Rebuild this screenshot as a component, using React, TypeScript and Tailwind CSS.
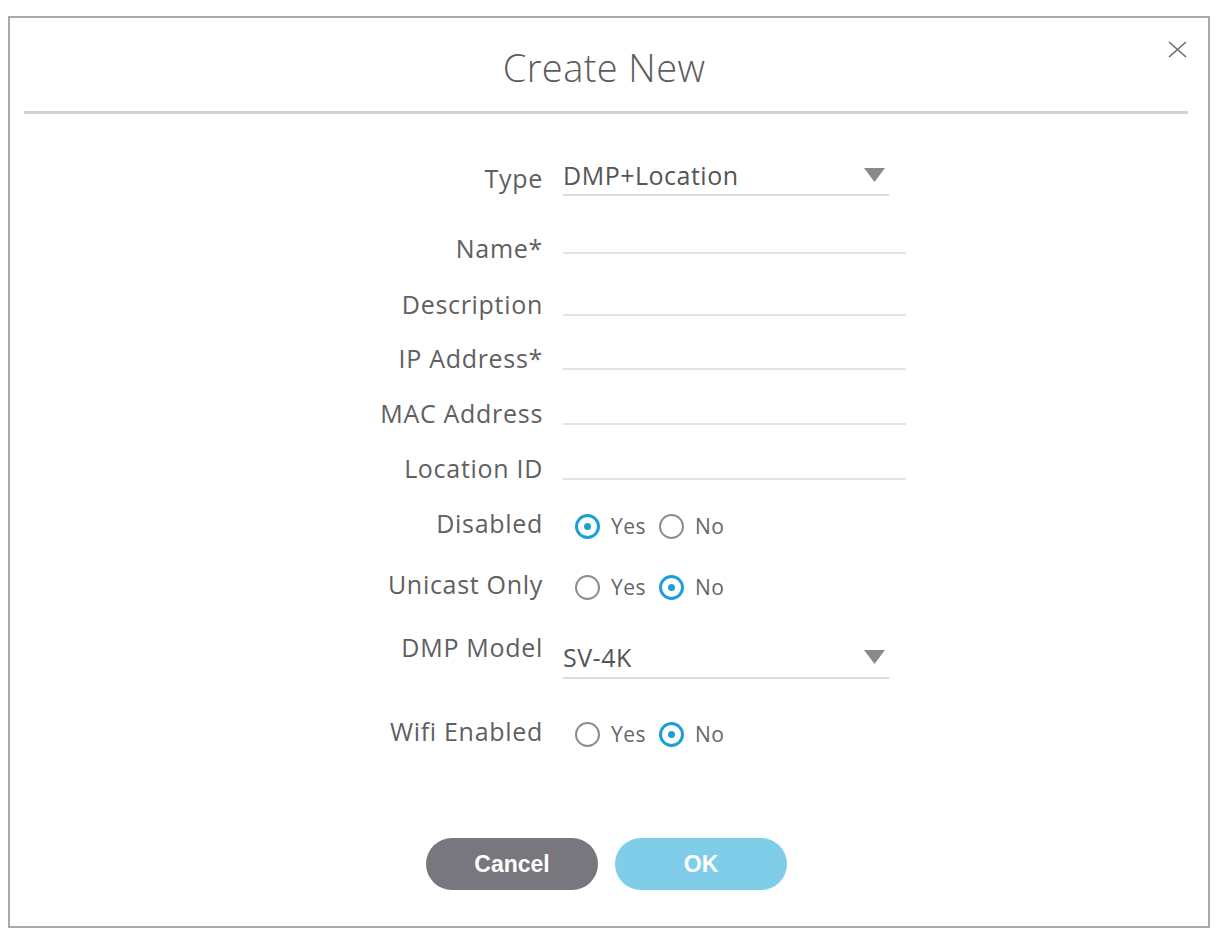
import React from "react";

const font = { fontFamily: '"Open Sans", "Liberation Sans", sans-serif' };

function Caret() {
  return (
    <svg width="21" height="14" viewBox="0 0 21 14" className="shrink-0">
      <polygon points="0,0 21,0 10.5,14" fill="#8a8a8a" />
    </svg>
  );
}

function Radio({ checked, label }: { checked: boolean; label: string }) {
  return (
    <span className="flex items-center gap-[11px]">
      {checked ? (
        <span className="flex h-[25px] w-[25px] items-center justify-center rounded-full border-[3px] border-[#1c9fd6]">
          <span className="h-[7px] w-[7px] rounded-full bg-[#1c9fd6]" />
        </span>
      ) : (
        <span className="h-[25px] w-[25px] rounded-full border-2 border-[#8d8d8d]" />
      )}
      <span className="text-[21px] leading-[30px] tracking-[0.5px] text-[#666]">{label}</span>
    </span>
  );
}

function Label({ children, className = "" }: { children: React.ReactNode; className?: string }) {
  return (
    <div
      className={`w-[533px] shrink-0 text-right text-[25px] leading-[30px] tracking-[0.7px] text-[#606060] ${className}`}
    >
      {children}
    </div>
  );
}

function TextRow({ label, mt, h }: { label: string; mt: string; h: string }) {
  return (
    <div className={`flex items-start gap-5 ${mt}`}>
      <Label>{label}</Label>
      <div className={`w-[343px] border-b-2 border-[#e4e4e4] ${h}`} />
    </div>
  );
}

function RadioRow({ label, yes, mt }: { label: string; yes: boolean; mt: string }) {
  return (
    <div className={`flex items-start gap-5 ${mt}`}>
      <Label>{label}</Label>
      <div className="ml-[12px] mt-[3px] flex h-[30px] items-center gap-[13px]">
        <Radio checked={yes} label="Yes" />
        <Radio checked={!yes} label="No" />
      </div>
    </div>
  );
}

export default function App() {
  return (
    <div className="h-[942px] bg-white pl-[8px] pt-[16px]" style={font}>
      <div className="relative flex h-[912px] w-[1202px] flex-col border-2 border-[#a9a9a9] bg-white">
        {/* header */}
        <div className="flex h-[93px] justify-center pr-[10px] pt-[30px]">
          <h1 className="text-[38px] font-light leading-[38px] tracking-[0.4px] text-[#5c5c5c]">Create New</h1>
        </div>
        <button className="absolute right-[21px] top-[23px] text-[#6a6a6a]">
          <svg width="19" height="17" viewBox="0 0 19 17" fill="none" stroke="currentColor" strokeWidth="1.6">
            <line x1="1" y1="1" x2="18" y2="16" />
            <line x1="18" y1="1" x2="1" y2="16" />
          </svg>
        </button>
        <div className="ml-[14px] mr-[20px] h-[3px] bg-[#d2d2d2]" />

        {/* form */}
        <div className="flex flex-col">
          <div className="mt-[46px] flex items-start gap-5">
            <Label className="pt-[3px]">Type</Label>
            <div className="flex w-[326px] items-center justify-between border-b-2 border-[#dcdcdc] pb-[4px] pr-[4px]">
              <span className="text-[25px] leading-[30px] tracking-[0.5px] text-[#555]">DMP+Location</span>
              <Caret />
            </div>
          </div>

          <TextRow label="Name*" mt="mt-[37px]" h="h-[21px]" />
          <TextRow label="Description" mt="mt-[26px]" h="h-[27px]" />
          <TextRow label="IP Address*" mt="mt-[24px]" h="h-[27px]" />
          <TextRow label="MAC Address" mt="mt-[25px]" h="h-[27px]" />
          <TextRow label="Location ID" mt="mt-[25px]" h="h-[27px]" />

          <RadioRow label="Disabled" yes={true} mt="mt-[25px]" />
          <RadioRow label="Unicast Only" yes={false} mt="mt-[28px]" />

          <div className="mt-[30px] flex items-start gap-5">
            <Label>DMP Model</Label>
            <div className="mt-[10px] flex w-[326px] items-center justify-between border-b-2 border-[#dcdcdc] pb-[5px] pr-[4px]">
              <span className="text-[25px] leading-[30px] tracking-[0.5px] text-[#555]">SV-4K</span>
              <Caret />
            </div>
          </div>

          <RadioRow label="Wifi Enabled" yes={false} mt="mt-[37px]" />
        </div>

        {/* buttons */}
        <div
          className="mt-[89px] flex justify-center gap-[17px] pr-[5px]"
          style={{ fontFamily: '"Liberation Sans", Arial, sans-serif' }}
        >
          <button className="h-[52px] w-[172px] rounded-full bg-[#77777d] text-[23px] font-bold text-white">
            Cancel
          </button>
          <button className="h-[52px] w-[172px] rounded-full bg-[#80cdea] text-[23px] font-bold text-white">
            OK
          </button>
        </div>
      </div>
    </div>
  );
}
